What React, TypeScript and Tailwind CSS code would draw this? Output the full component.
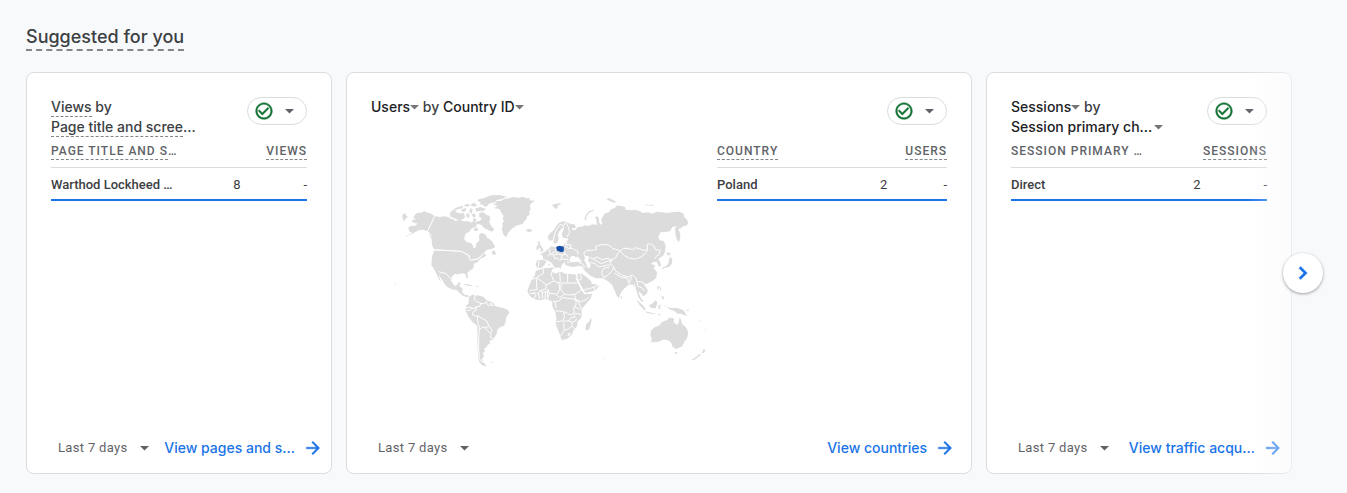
import type { ReactNode } from "react";

function Icon({ path, className }: { path: string; className: string }) {
  return (
    <svg viewBox="0 0 24 24" className={className} aria-hidden="true">
      <path d={path} fill="currentColor" stroke="currentColor" strokeWidth="0.5" />
    </svg>
  );
}

const CHECK_CIRCLE =
  "M16.59 7.58L10 14.17l-3.59-3.58L5 12l5 5 8-8zM12 2C6.48 2 2 6.48 2 12s4.48 10 10 10 10-4.48 10-10S17.52 2 12 2zm0 18c-4.42 0-8-3.58-8-8s3.58-8 8-8 8 3.58 8 8-3.58 8-8 8z";
const ARROW_FORWARD = "M12 4l-1.41 1.41L16.17 11H4v2h12.17l-5.58 5.59L12 20l8-8z";
const CHEVRON_RIGHT = "M9.7 5.5L8 7.2 12.8 12 8 16.8l1.7 1.7 6.5-6.5z";

function Caret({ className = "text-[#5f6368]" }: { className?: string }) {
  return (
    <svg viewBox="0 0 9 5" className={`inline-block h-[5px] w-[9px] shrink-0 ${className}`} aria-hidden="true">
      <path d="M0 0h9L4.5 4.5z" fill="currentColor" />
    </svg>
  );
}

function Hint({ children, tight = false }: { children: ReactNode; tight?: boolean }) {
  return (
    <span className={`inline-block border-b border-dashed border-[#80868b] ${tight ? "leading-4" : "leading-[18px]"}`}>
      {children}
    </span>
  );
}

function Picker({ children, spaced = false }: { children: ReactNode; spaced?: boolean }) {
  return (
    <button type="button" className={`inline-flex items-center text-[#202124] ${spaced ? "gap-0.5" : ""}`}>
      {children}
      <Caret className="text-[#757575]" />
    </button>
  );
}

function StatusChip() {
  return (
    <button
      type="button"
      aria-label="Data quality"
      className="flex h-7 w-[60px] shrink-0 items-center justify-between rounded-full border border-[#dadce0] bg-white pr-3 pl-1.5"
    >
      <Icon path={CHECK_CIRCLE} className="size-5 text-[#137333]" />
      <Caret />
    </button>
  );
}

type TableProps = { dimension: ReactNode; metric: string; name: string; value: string };

function DataTable({ dimension, metric, name, value }: TableProps) {
  return (
    <table className="w-full table-fixed border-collapse whitespace-nowrap font-['Roboto',sans-serif]">
      <colgroup>
        <col className="w-[50%]" />
        <col className="w-[24%]" />
        <col className="w-[26%]" />
      </colgroup>
      <thead>
        <tr className="h-[30px] border-b border-[#dadce0] text-xs leading-4 tracking-[1px] text-[#5f6368]">
          <th scope="col" className="p-0 pb-[7px] text-left align-bottom font-medium">{dimension}</th>
          <th scope="col" colSpan={2} className="p-0 pb-[7px] text-right align-bottom font-medium">
            <Hint tight>{metric}</Hint>
          </th>
        </tr>
      </thead>
      <tbody>
        <tr className="h-[33px] border-b-2 border-[#1a73e8] text-[13px] leading-4 text-[#3c4043]">
          <th scope="row" className="p-0 pt-[3px] text-left font-medium">{name}</th>
          <td className="p-0 pt-[3px] text-right">{value}</td>
          <td className="p-0 pt-[3px] text-right">-</td>
        </tr>
      </tbody>
    </table>
  );
}

function Footer({ id, link, wide = false }: { id: string; link: string; wide?: boolean }) {
  return (
    <div className={`mt-auto flex items-center justify-between pb-[13px] pl-[31px] ${wide ? "pr-4" : "pr-2"}`}>
      <label htmlFor={id} className="flex items-center gap-3 font-['Roboto',sans-serif] text-[13px] text-[#5f6368]">
        <select id={id} aria-label="Date range" className="cursor-pointer appearance-none bg-transparent leading-6 tracking-wide outline-none">
          <option>Last 7 days</option>
        </select>
        <Caret />
      </label>
      <a href="#report" className="flex items-center gap-2 text-sm leading-6 font-medium whitespace-nowrap text-[#1a73e8]">
        {link}
        <Icon path={ARROW_FORWARD} className="size-5" />
      </a>
    </div>
  );
}

function Card({ title, footer, wide = false, children }: { title: ReactNode; footer: ReactNode; wide?: boolean; children: ReactNode }) {
  return (
    <article className={`flex min-h-[402px] min-w-0 flex-col rounded-lg border border-[#dadce0] bg-white ${wide ? "col-span-2" : ""}`}>
      <div className="px-6 pt-6">
        <header className="flex h-10 items-start justify-between">
          <h3 className="text-sm leading-5 font-medium whitespace-nowrap text-[#3c4043]">{title}</h3>
          <StatusChip />
        </header>
        {children}
      </div>
      {footer}
    </article>
  );
}

function WorldMap() {
  return (
    <svg viewBox="0 0 960 570" className="w-full max-w-[320px]" role="img" aria-label="Users by country">
      <g fill="#dcdcdc" stroke="none">
        {/* North America */}
        <path d="M76 88l10-6 4 2 14-5 10 5 6 0 14 9-21 46-13-5-14 2-14 7-10 5-17 9 0-2 21-12-9-5-2-10 8-6 10 1 6-3 2-6-12-1-4-8 10-1 2-3-8-2zM38 88l8-3 2 6 5 6-7 5-5 8-1-6-3-7zM12 295l6 3-2 2z" />
        <path d="M134 93L150 97L160 94L175 96L183 102L190 102L194 108L210 105L220 109L236 109L244 113L252 107L258 113L266 109L268 115L260 119L256 127L246 129L238 140L228 145L224 153L223 164L231 172L243 173L248 180L251 190L257 188L258 176L268 167L267 150L274 143L282 146L288 151L292 160L298 161L308 172L316 186L306 191L290 195L280 205L286 207L275 214L262 222L241 227L238 211L215 199L133 193L127 184L124 160L113 139z" />
        <path d="M133 196L214 200L236 212L241 227L262 224L276 214L290 208L284 216L270 222L262 232L252 236L250 250L238 258L232 264L234 278L231 282L226 267L216 265L206 268L195 267L186 274L183 286L190 298L194 303L202 300L204 293L212 291L208 305L214 307L218 312L216 320L208 320L200 315L186 313L172 306L164 298L160 290L152 278L146 268L152 290L148 285L141 270L135 257L124 240L126 214z" />
        <path d="M206 315L216 317L217 324L226 330L234 331L240 335L232 335L220 332L208 322zM218 298L232 297L250 303L240 303zM258 302L266 304L262 307zM305 200L313 195L319 208L307 209zM278 207L286 208L284 215L279 215z" />
        <path d="M265 48l9-6 14-5 16-6 24-1 22 5-15 7-18 4 4 4-14 3-10 3-4 6-8 4-6-6-10-2 4-4zM262 45l12-5 2 4-10 6zM240 60l12-7 9 8-7 4zM256 70l16-4 16 6-8 6-22 1zM180 83l8-7 12-2-4 7 12 4 14 0 3 12-6 6-12 3-14-6-12-5zM190 72l16-7 14-3-4 8-18 4zM212 76l14-8 3 8-8 6zM228 88l8-4 3 12-8 2zM240 70l8 3-3 14-7-6zM245 88l9-3 3 8-7 5zM220 62l12-6 8 4-6 5zM248 102l8-3 4 8-8 3zM268 84l12-3 10 9 9 2 2 12-4 7 7 12 8 9-2 7-8 0-8-5-9-3-10-10-9-4-8-7 12-3 6-7-9-5zM250 133l10-6 6 8-10 4z" />
        <path d="M308 57L320 54L316 49L332 48L342 42L356 40L370 36L384 38L400 35L408 40L422 39L417 45L435 48L424 55L420 62L422 74L417 80L420 88L410 96L410 103L402 110L398 117L382 121L368 129L360 137L354 144L350 156L343 152L338 144L335 130L339 122L336 116L342 108L338 102L341 92L334 84L329 73L313 69L322 62z" />
        <path d="M407 136l8-4 10 2 2 4-12 4z" />
        {/* South America */}
        <path transform="translate(0 270)" d="M236 70L242 62L252 58L254 64L262 61L280 65L290 76L298 79L310 84L316 92L322 95L340 99L352 104L358 111L354 120L348 127L347 142L342 152L330 157L322 164L320 176L314 186L307 196L298 195L301 205L292 211L290 217L282 220L285 228L279 235L282 242L276 252L278 259L290 273L280 272L270 265L265 252L263 220L262 190L262 152L248 142L236 126L227 108L228 92L236 86z" />
        <path transform="translate(0 270)" d="M302 261L311 259L308 263zM208 48L216 52L222 60L232 62L234 66L222 64L212 56L204 50zM258 32L266 34L260 36z" />
        {/* Europe and Asia */}
        <g transform="translate(465 0)">
          <path d="M9 153L16 144L26 136L34 122L42 113L54 109L64 110L74 116L88 118L94 126L88 130L80 128L84 136L92 134L98 126L112 125L118 121L130 123L144 118L156 120L154 104L150 98L156 93L162 100L162 112L168 120L172 114L168 104L174 94L178 86L192 82L196 74L210 68L214 62L226 62L240 66L242 74L256 76L272 75L284 78L292 84L310 82L322 86L334 80L350 82L368 84L384 81L404 80L416 86L418 96L426 104L430 114L424 122L414 124L408 130L400 132L406 146L405 164L400 172L394 160L391 146L390 130L396 124L382 126L376 138L362 141L346 142L340 156L344 166L356 168L362 182L360 200L356 210L346 218L340 222L346 232L348 244L341 244L336 232L326 230L318 236L332 242L326 250L336 262L334 278L322 288L306 296L296 298L304 308L309 318L304 328L294 334L288 324L280 320L286 336L296 350L290 350L280 336L276 322L270 308L262 298L250 300L236 312L226 326L222 340L214 330L208 314L200 298L188 288L174 280L152 280L136 272L120 258L110 246L96 244L84 246L72 244L62 240L58 232L50 240L46 252L38 244L30 232L34 226L42 240L36 250L28 246L18 232L10 228L4 230L-2 240L-10 248L-24 248L-28 240L-24 226L-6 224L-6 214L-14 206L0 200L12 190L18 184L34 186L52 184L58 178L62 168L70 160L64 160L54 158L50 146L56 132L50 130L42 140L38 152L42 160L36 174L28 176L24 164L14 168L9 160z" />
          <path d="M118 104L122 90L130 80L144 74L146 77L132 84L124 94L124 104zM20 60l10-3 18-3-2 4-8 4 0 5-6 6-6-8zM184 42l8-3 12 6 10 7-8 1-12-5zM300 57l12 3 14-1-2 3-20-1zM-22 168l8 3-2 6 7 10 5 10-12 4 4-8-7-8zM-25 182l7-1-1 12-7 2zM364 204l4-3 10 6-8 5zM374 215L382 222L380 238L372 246L356 250L352 254L350 250L362 244L370 236zM338 302L342 304L340 314L336 310zM20 246L28 250L26 253L18 250zM10 236L14 236L13 244L10 243z" />
          <path fill="#ffffff" d="M74 222L80 212L90 214L92 218L98 214L104 222L112 230L96 230L84 232L74 230zM120 214L130 212L132 222L128 226L136 236L136 248L128 248L124 236L118 226z" />
        </g>
        {/* Africa, Arabia and Oceania */}
        <g transform="translate(375 240)">
          <path d="M62 18L72 14L88 10L108 8L112 10L110 20L124 26L132 20L142 22L150 26L164 27L180 28L186 36L181 38L190 56L198 74L208 88L232 86L226 102L210 120L200 132L200 150L198 160L188 168L186 184L176 196L170 210L156 222L140 225L136 212L128 192L122 176L124 160L120 138L112 124L112 110L102 104L90 102L72 106L56 102L44 92L37 78L42 64L50 44L60 30z" />
          <path d="M188 26L200 26L212 34L228 48L230 56L252 60L246 72L236 78L212 84L206 74L196 58L188 40zM227 158L230 166L224 190L218 196L211 194L213 178L222 170zM317 92L322 96L320 102L317 98z" />
          <path d="M409 196L420 186L432 182L440 172L448 168L456 166L462 158L474 158L478 164L475 170L486 180L491 174L494 156L498 164L502 178L510 184L518 196L519 208L516 220L508 230L502 244L492 248L482 252L472 244L468 232L462 228L454 224L442 224L432 230L418 232L408 232L410 222L406 208zM479 261l8 1-3 6-4-1z" />
          <path d="M364 104l10 8 12 12 7 10-5 2-14-15zM390 139l14 3 18 4-2 2-24-4zM403 121l10-6 8-9 6 5-2 10-3 9-12-1-6-4zM430 121l12-2-8 5 4 10-4-4-4 3zM428 148l10-1-4 5zM455 125L466 128L474 130L484 128L496 132L508 138L512 146L518 154L508 150L498 146L488 146L478 138L466 134zM434 62l4 6 0 10-4-6zM440 92l7 3-1 9-6-5zM450 120l3 4-3 3zM510 139l12-7-2 5zM550 160l10 8-2 1zM566 192l6 4-2 1zM530 284L544 275L554 266L558 268L550 276L536 286zM566 252L572 256L566 264L560 264zM265 282l5-2 0 3z" />
        </g>
      </g>
      <g fill="none" stroke="#ffffff" strokeWidth="3" strokeLinejoin="round">
        <path d="M134 93L113 139L125 152M133 194L214 199L236 211L240 226L264 221L280 206M146 260L168 266L185 284" />
        <path transform="translate(0 270)" d="M256 62L252 74L260 80L272 84L270 94L260 94L252 102L240 96L228 98M272 86L284 86L290 78M290 80L292 90L298 92L302 84M304 84L304 92L314 90M260 96L258 106L248 112L248 120L258 124L264 122L276 130L290 138L296 152L290 158L278 156L270 162L264 146L262 124M268 160L266 190L266 220L268 250L278 264M296 152L306 166L302 176L292 166L284 158M304 178L300 186L310 192M230 106L240 106L246 98" />
        <g transform="translate(465 0)">
          <path d="M24 168L28 150L34 134L46 118L56 122L62 112M56 124L54 134M62 112L70 126L74 142L66 156M68 162L64 172L54 176M64 172L62 186L70 190L84 190L88 194L100 200L98 208M56 198L60 208L50 210L38 206L30 200L20 206M34 184L32 196M12 192L16 206L8 214M-6 224L10 228M16 208L26 210L38 208M26 212L30 222L38 220L44 226L52 222L70 224M52 210L48 222M58 206L66 210L70 218M62 178L78 180L76 190M-18 226L-20 246M66 232L74 232" />
          <path d="M120 216L116 204L126 196L140 196L154 194L152 184L166 180L182 178L194 182L202 190L216 194L226 198L218 206L212 218L200 224L186 220L170 224L156 216L144 222L134 216M226 198L236 190L250 190L262 194L272 188L284 192L296 196L308 194L306 178L314 176L326 182L332 194L346 196L342 208L334 214L330 220M228 200L238 212L254 220L272 222L288 216L300 206L308 196M136 232L150 236L162 246L172 244L188 240L196 240M144 222L158 230L170 236L184 230L200 226M200 224L196 236L206 246L202 256L190 270L176 278M176 278L170 262L176 250L194 246M206 246L212 258L230 270L250 276L262 270L272 278L276 290M208 264L228 276L248 280L252 298M260 274L254 292M276 290L288 290L300 296M276 292L278 304L290 308L298 318M268 298L272 312M108 244L112 258L124 268M118 250L108 244L94 246M100 232L112 236L120 246" />
        </g>
        <g transform="translate(375 240)">
          <path d="M84 12L86 24L64 38L50 44M66 38L94 60L116 48L108 26L114 18M64 40L66 74L44 76M94 60L92 72L76 76L66 88M116 48L132 54L134 74L126 88L104 84L98 72M132 54L136 50L134 22M138 54L172 54L188 54M158 28L158 52M138 54L138 74L146 86L160 90L178 88L190 82L198 76M126 90L134 98L148 88M178 88L182 102L196 110L214 104L222 96M82 80L82 100M92 78L90 104M98 74L98 100M70 84L74 102M58 80L62 92L56 102M44 84L58 86M76 78L86 82L96 80M104 84L98 100M114 110L132 108L142 98L160 100L176 102L184 108L182 122L176 130L178 142L168 150L154 144L146 140L134 138L122 138M176 102L190 108L196 126L200 132M178 124L196 134M178 144L198 148M146 140L148 154L144 168L124 170M148 168L160 168L168 158L180 156L176 146M160 168L172 172L170 184L160 192L148 196L146 172M146 196L138 212M172 172L182 168L184 160M172 184L180 194M160 206L166 206L164 211L159 210zM190 46L200 42L196 28M214 28L204 18L200 8M208 74L226 70L236 66L250 60M236 66L240 76M120 110L124 130M186 24L172 22" />
        </g>
      </g>
      <path d="M499 185l10-3 12 3 1 7-2 9-8 0-10-4-3-6z" fill="#174ea6" />
    </svg>
  );
}

export default function App() {
  return (
    <main className="min-h-screen bg-[#f8f9fb] font-['Inter',sans-serif]">
      <section className="pt-6 pb-[19px]">
        <h2 className="ml-[26px] w-fit border-b-2 border-dashed border-[#80868b] text-lg leading-[25px] font-medium text-[#3c4043]">
          Suggested for you
        </h2>
        <div className="relative mt-[21px]">
          <div className="grid grid-cols-4 gap-3.5 pr-[55px] pl-[26px]">
            <Card
              title={
                <>
                  <Hint>Views</Hint> by
                  <br />
                  <Hint>Page title and scree</Hint>…
                </>
              }
              footer={<Footer id="range-pages" link="View pages and s…" />}
            >
              <DataTable dimension={<><Hint tight>PAGE TITLE AND S</Hint>…</>} metric="VIEWS" name="Warthod Lockheed …" value="8" />
            </Card>
            <Card
              wide
              title={
                <>
                  <Picker>Users</Picker> by <Picker>Country ID</Picker>
                </>
              }
              footer={<Footer id="range-countries" link="View countries" wide />}
            >
              <div className="flex justify-between">
                <div className="flex min-w-0 flex-1 justify-end pt-12 pr-[7px]">
                  <WorldMap />
                </div>
                <div className="w-[230px] shrink-0">
                  <DataTable dimension={<Hint tight>COUNTRY</Hint>} metric="USERS" name="Poland" value="2" />
                </div>
              </div>
            </Card>
            <Card
              title={
                <>
                  <Picker>Sessions</Picker> by
                  <br />
                  <Picker spaced>Session primary ch…</Picker>
                </>
              }
              footer={<Footer id="range-traffic" link="View traffic acqu…" />}
            >
              <DataTable
                dimension={<span className="inline-block border-b border-transparent">SESSION PRIMARY …</span>}
                metric="SESSIONS"
                name="Direct"
                value="2"
              />
            </Card>
          </div>
          <div className="pointer-events-none absolute inset-y-0 right-0 w-[100px] bg-linear-to-r from-[#f8f9fb]/0 to-[#f8f9fb] to-80%" />
          <button
            type="button"
            aria-label="Next"
            className="absolute top-1/2 right-6 flex size-10 -translate-y-1/2 items-center justify-center rounded-full bg-white text-[#1a73e8] shadow-[0_1px_3px_rgba(60,64,67,0.5)]"
          >
            <Icon path={CHEVRON_RIGHT} className="size-6" />
          </button>
        </div>
      </section>
    </main>
  );
}
